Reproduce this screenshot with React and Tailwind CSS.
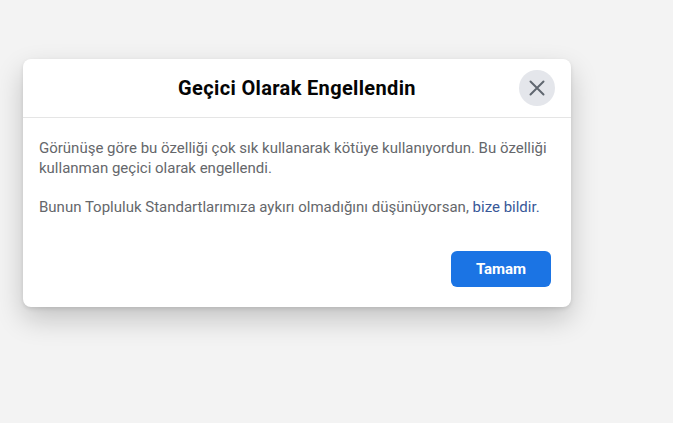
import React from "react";

function CloseIcon() {
  return (
    <svg width="20" height="20" viewBox="0 0 20 20" fill="none">
      <path
        d="M3.5 3.5l13 13M16.5 3.5l-13 13"
        stroke="#606770"
        strokeWidth="2"
        strokeLinecap="round"
      />
    </svg>
  );
}

export default function App() {
  return (
    <div
      className="min-h-screen w-full bg-[#f3f3f3] pt-[59px] pl-[23px]"
      style={{ fontFamily: "Roboto, 'Noto Sans', sans-serif" }}
    >
      <div className="w-[548px] rounded-lg bg-white shadow-[0_12px_28px_0_rgba(0,0,0,0.2),0_2px_4px_0_rgba(0,0,0,0.1)]">
        {/* header */}
        <div className="relative flex h-[59px] items-center justify-center border-b border-[#e5e5e5]">
          <h2 className="text-[20px] font-bold tracking-[0.35px] text-[#050505]">
            Geçici Olarak Engellendin
          </h2>
          <button className="absolute right-4 top-[11px] flex h-9 w-9 items-center justify-center rounded-full bg-[#e4e6eb]">
            <CloseIcon />
          </button>
        </div>

        {/* body */}
        <div className="px-4 pt-5 text-[15px] leading-5 text-[#65676b]">
          <p>
            Görünüşe göre bu özelliği çok sık kullanarak kötüye kullanıyordun. Bu
            özelliği kullanman geçici olarak engellendi.
          </p>
          <p className="mt-[19px]">
            Bunun Topluluk Standartlarımıza aykırı olmadığını düşünüyorsan,{" "}
            <a href="#" className="text-[#385898]">
              bize bildir.
            </a>
          </p>
        </div>

        {/* footer */}
        <div className="flex justify-end px-5 pt-[34px] pb-5">
          <button className="h-9 w-[100px] rounded-md bg-[#1b74e4] text-[15px] font-bold text-white">
            Tamam
          </button>
        </div>
      </div>
    </div>
  );
}
